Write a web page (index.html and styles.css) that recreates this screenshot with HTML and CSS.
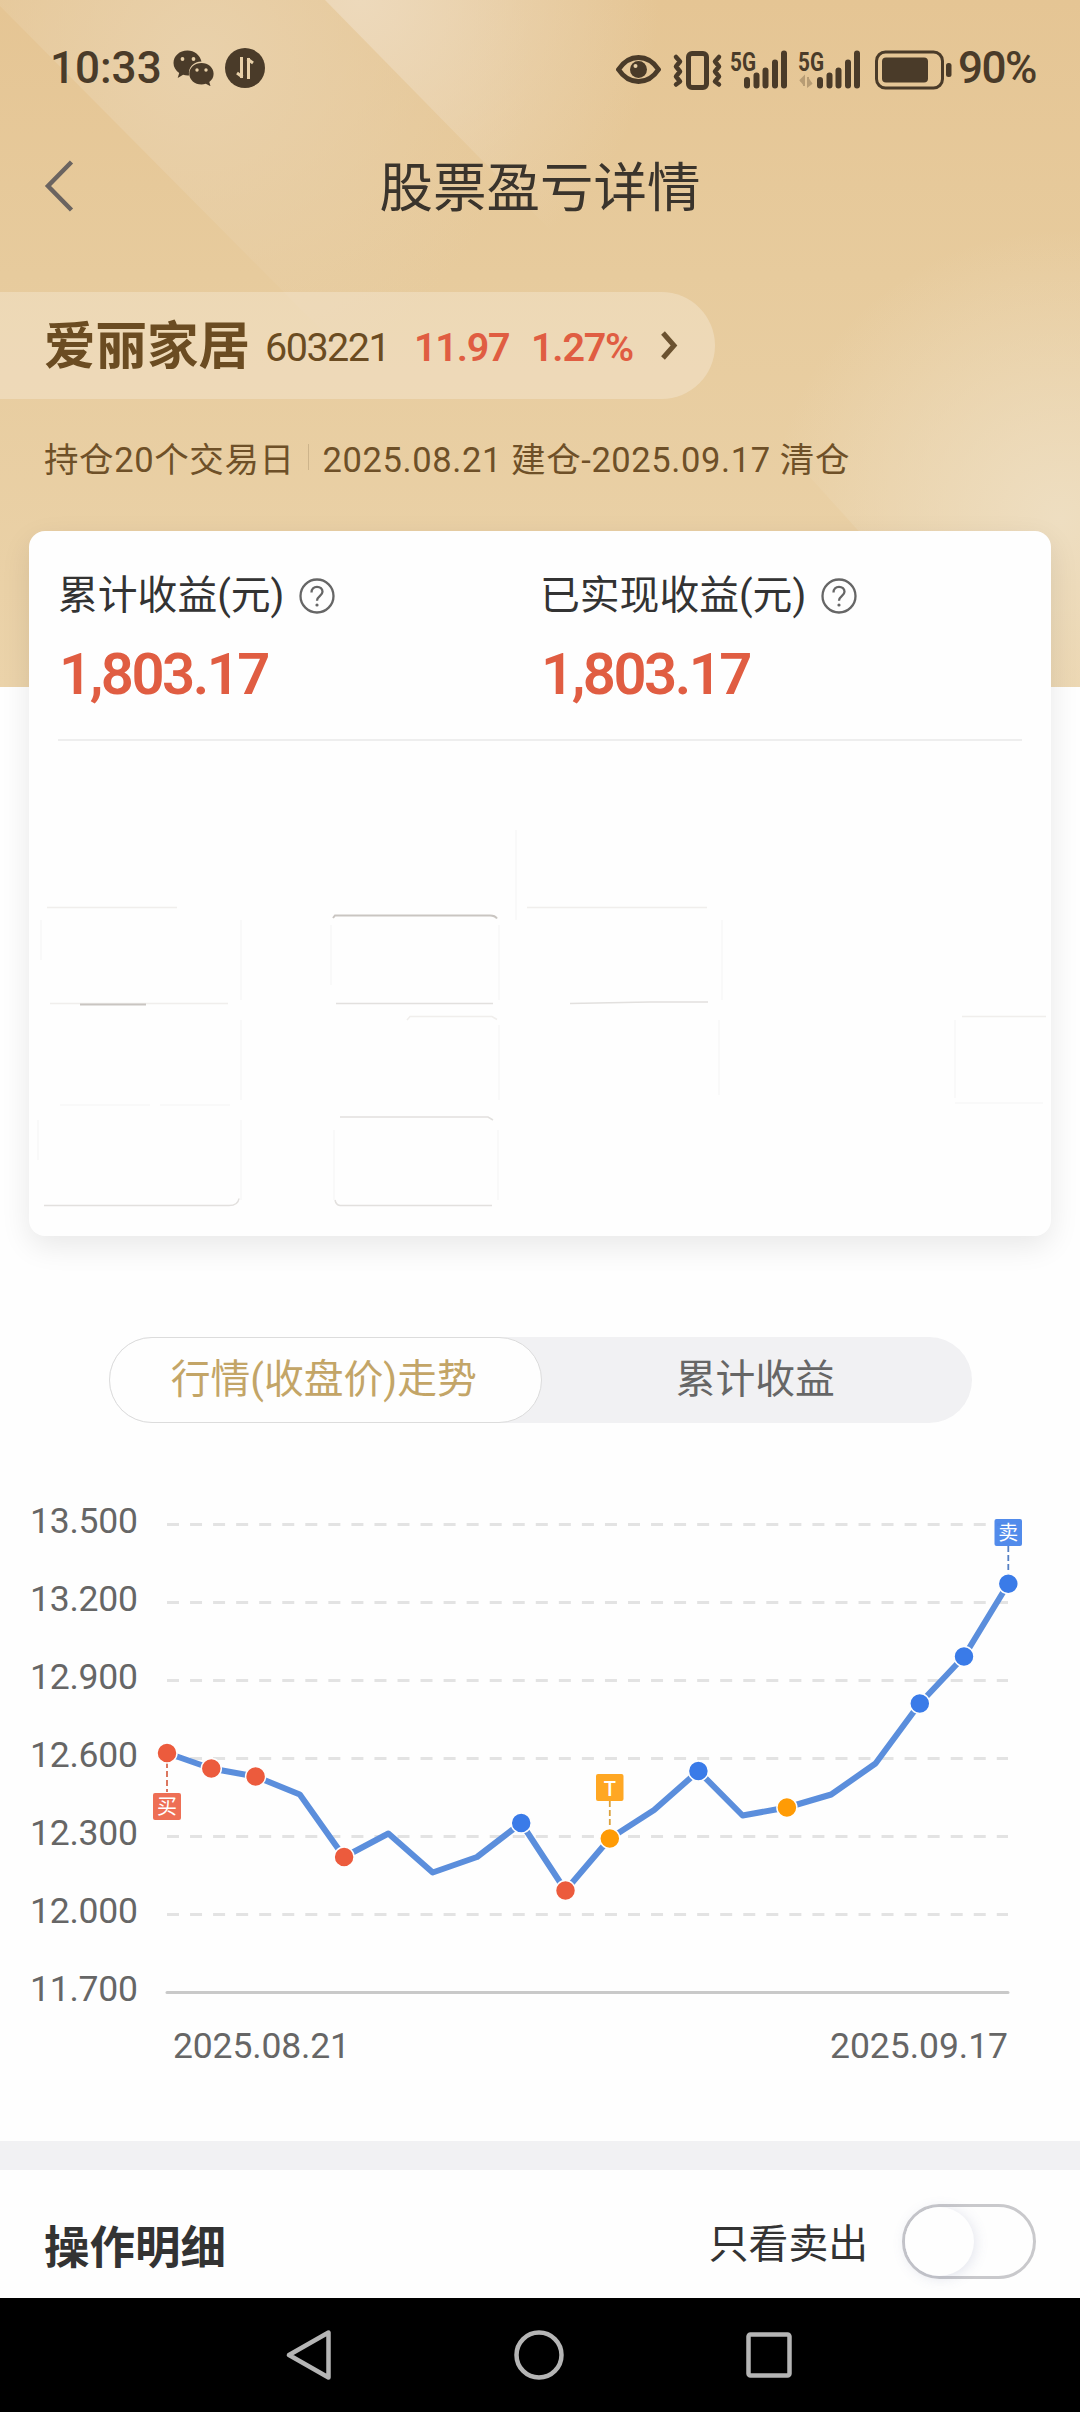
FILE: index.html
```
<!DOCTYPE html>
<html lang="zh-CN">

<head>
    <meta charset="UTF-8">
    <meta name="viewport" content="width=device-width, initial-scale=1.0">
    <title>股票盈亏详情</title>
    <link rel="stylesheet" href="styles.css">
</head>

<body>
    <header class="hero">
        <svg class="hero-bg" viewBox="0 0 1080 687" preserveAspectRatio="none">
            <defs>
                <linearGradient id="base" x1="0" y1="0" x2="0" y2="1">
                    <stop offset="0" stop-color="#e5c594" />
                    <stop offset="0.4" stop-color="#e7cb9d" />
                    <stop offset="1" stop-color="#ebd3aa" />
                </linearGradient>
                <radialGradient id="ray" gradientUnits="userSpaceOnUse" cx="200" cy="60" r="330">
                    <stop offset="0" stop-color="#e9d1ab" />
                    <stop offset="1" stop-color="#e9d1ab" stop-opacity="0" />
                </radialGradient>
                <radialGradient id="ray2" gradientUnits="userSpaceOnUse" cx="360" cy="0" r="300">
                    <stop offset="0" stop-color="#edd9bb" />
                    <stop offset="1" stop-color="#edd9bb" stop-opacity="0" />
                </radialGradient>
                <radialGradient id="ray3" gradientUnits="userSpaceOnUse" cx="1060" cy="520" r="290">
                    <stop offset="0" stop-color="#eedec1" />
                    <stop offset="1" stop-color="#eedec1" stop-opacity="0" />
                </radialGradient>
            </defs>
            <rect width="1080" height="687" fill="url(#base)" />
            <path d="M0 0h700v500H490L0 6z" fill="url(#ray)" />
            <path d="M325 0h755v500H815z" fill="url(#ray2)" />
            <path d="M1080 150v537H1000L740 400z" fill="url(#ray3)" />
        </svg>

        <div class="status-bar">
            <div class="status-left">
                <span class="clock">10:33</span>
                <svg class="wechat" width="42" height="36" viewBox="0 0 42 36">
                    <path d="M14.500 0.500C6.500 0.500 0.500 6 0.500 13c0 4 2.200 7.600 5.700 9.900l-1.500 5 5.400-3.100c1.500.5 3 .6 4.600.6h1.300C15 17 21 11.700 28.500 11.600 27 5 21.300.5 14.500.5z" />
                    <path d="M28.500 13C21.700 13 16.300 17.700 16.300 23.700s5.400 10.800 12.200 10.800c1.600 0 3-.2 4.300-.7l4.700 2.400-1.200-4.200c2.700-2 4.300-5 4.300-8.300C40.600 17.700 35.200 13 28.500 13z" />
                    <g class="hole">
                        <circle cx="9.500" cy="9" r="1.900" />
                        <circle cx="20.500" cy="9" r="1.900" />
                        <circle cx="24" cy="20" r="1.700" />
                        <circle cx="33" cy="20" r="1.700" />
                    </g>
                </svg>
                <svg class="transfer" width="40" height="40" viewBox="0 0 40 40">
                    <circle cx="20" cy="20" r="20" />
                    <path class="hole-line" d="M16.500 9v21M17.500 29l-5.500-4M23.500 31V10M22.500 11l5.500 4" />
                </svg>
            </div>
            <svg class="status-icons" width="336" height="44" viewBox="0 0 336 44">
                <!-- eye -->
                <path class="line" d="M2.500 23.500C13 7.500 32 7.500 42.500 23.500C32 39.500 13 39.500 2.500 23.500z" />
                <circle cx="22.500" cy="23.500" r="8.500" />
                <circle class="hole" cx="19.500" cy="20" r="2" />
                <!-- vibrate -->
                <rect class="line" x="72.500" y="7.500" width="18" height="34" rx="3.500" />
                <path class="line zigzag" d="M60 11l4 4.500-4 5 4 5-4 5 4 5-4 3M103 11l-4 4.500 4 5-4 5 4 5-4 5 4 3" />
                <!-- sim 1 -->
                <text class="net" x="114" y="25" textLength="26" lengthAdjust="spacingAndGlyphs">5G</text>
                <path class="bars" d="M131 34v5.500M140.500 29.500v10M149.500 24.500v15M159 16.500v23M168 7.500v32" />
                <!-- sim 2 -->
                <text class="net" x="182" y="25" textLength="26" lengthAdjust="spacingAndGlyphs">5G</text>
                <path class="idle" d="M184 35l4-4v9M196 37l-4 3V31" />
                <path class="bars" d="M204 34v5.500M213.500 29.500v10M222.500 24.500v15M232 16.500v23M241 7.500v32" />
                <!-- battery -->
                <rect class="thin" x="260.500" y="6" width="66" height="36" rx="9" />
                <rect x="266" y="11.500" width="46" height="25" rx="4" />
                <rect x="330" y="17" width="5.500" height="14" rx="2.500" />
            </svg>
            <span class="battery-level">90%</span>
        </div>

        <div class="title-bar">
            <svg class="back" width="30" height="54" viewBox="0 0 30 54">
                <path d="M27.500 3L4 27l23.500 24" />
            </svg>
            <h1>股票盈亏详情</h1>
        </div>

        <div class="stock-pill">
            <span class="stock-name">爱丽家居</span>
            <span class="stock-code">603221</span>
            <span class="stock-price">11.97</span>
            <span class="stock-change">1.27%</span>
            <svg class="more" width="18" height="30" viewBox="0 0 18 30">
                <path d="M3 2l11 12.500L3 27" />
            </svg>
        </div>

        <div class="holding">
            <span>持仓20个交易日</span>
            <i class="sep"></i>
            <span>2025.08.21 建仓-2025.09.17 清仓</span>
        </div>
    </header>

    <section class="card">
        <div class="profits">
            <div class="profit">
                <div class="label">累计收益(元)
                    <svg class="help" width="36" height="36" viewBox="0 0 36 36">
                        <circle cx="18" cy="18" r="16.500" />
                        <path d="M12.500 14.500c0-3.500 2.400-5.700 5.500-5.700s5.500 2.100 5.500 5c0 4-5.500 4.200-5.500 9" />
                        <circle class="dot" cx="18" cy="27" r="1.600" />
                    </svg>
                </div>
                <div class="amount">1,803.17</div>
            </div>
            <div class="profit">
                <div class="label">已实现收益(元)
                    <svg class="help" width="36" height="36" viewBox="0 0 36 36">
                        <circle cx="18" cy="18" r="16.500" />
                        <path d="M12.500 14.500c0-3.500 2.400-5.700 5.500-5.700s5.500 2.100 5.500 5c0 4-5.500 4.200-5.500 9" />
                        <circle class="dot" cx="18" cy="27" r="1.600" />
                    </svg>
                </div>
                <div class="amount">1,803.17</div>
            </div>
        </div>
        <svg class="cells" width="1022" height="495" viewBox="29 741 1022 495">
            <g class="faint">
                <path d="M516 830v90M241 920v80M41 920v40M722 920v80M499 925v75M331 925v60M241 1020v80M499 1025v75M719 1020v75M955 1020v78M241 1120v80M498 1130v70M334 1130v70M38 1120v40" />
                <path d="M955 1103h88M160 1105h70M60 1105h90" />
            </g>
            <g class="soft">
                <path d="M47 907.500h130M527 907.500h180M962 1016.500h84M407 1020l3-3.500h82l5 3M50 1003.500h178" />
            </g>
            <g class="mid">
                <path d="M336 1003.500h157M570 1003.500l80-1.500h58M340 1117h148l5 3M335 1200q1 5 5 5.500h152M44 1205.500h185q9 0 10-7" />
            </g>
            <path class="strong" d="M333 918l2-2.500h155q5 0 7 3M80 1004.500h66" />
        </svg>
    </section>

    <nav class="tabs">
        <a class="tab active">行情(收盘价)走势</a>
        <a class="tab">累计收益</a>
    </nav>

    <svg class="chart" width="1080" height="600" viewBox="0 1480 1080 600">
        <g class="grid">
            <path d="M167 1524.500h841M167 1602.500h841M167 1680.500h841M167 1758.500h841M167 1836.500h841M167 1914.500h841" />
        </g>
        <path class="axis" d="M167 1992.500h841" />

        <g class="y-labels">
            <text x="30" y="1533" textLength="108">13.500</text>
            <text x="30" y="1611" textLength="108">13.200</text>
            <text x="30" y="1689" textLength="108">12.900</text>
            <text x="30" y="1767" textLength="108">12.600</text>
            <text x="30" y="1845" textLength="108">12.300</text>
            <text x="30" y="1923" textLength="108">12.000</text>
            <text x="30" y="2001" textLength="108">11.700</text>
            <text x="173" y="2058" textLength="177">2025.08.21</text>
            <text x="830" y="2058" textLength="178">2025.09.17</text>
        </g>

        <polyline class="price" points="167,1753 211.300,1768.500 255.600,1776.500 299.800,1794.500 344.100,1857 388.400,1833.500 432.700,1872.500 477,1857 521.200,1823 565.500,1890.500 609.800,1838.500 654.100,1810 698.400,1771 742.600,1815.500 786.900,1807.500 831.200,1794.500 875.500,1763.500 919.800,1703.500 964,1656.500 1008.300,1583.700" />

        <g class="buy">
            <path class="lead" d="M167 1762v30" />
            <rect x="153" y="1793" width="28" height="27" rx="2" />
            <circle cx="167" cy="1753" r="10" />
            <circle cx="211.300" cy="1768.500" r="10" />
            <circle cx="255.600" cy="1776.500" r="10" />
            <circle cx="344.100" cy="1857" r="10" />
            <circle cx="565.500" cy="1890.500" r="10" />
        </g>
        <g class="sell">
            <path class="lead" d="M1008.300 1546v30" />
            <rect x="994.500" y="1519" width="27.500" height="27" rx="2" />
            <circle cx="521.200" cy="1823" r="10" />
            <circle cx="698.400" cy="1771" r="10" />
            <circle cx="919.800" cy="1703.500" r="10" />
            <circle cx="964" cy="1656.500" r="10" />
            <circle cx="1008.300" cy="1583.700" r="10" />
        </g>
        <g class="t-trade">
            <path class="lead" d="M609.800 1801v30" />
            <rect x="596" y="1774" width="27.500" height="27" rx="2" />
            <circle cx="609.800" cy="1838.500" r="10" />
            <circle cx="786.900" cy="1807.500" r="10" />
        </g>
        <g class="tags">
            <text x="167" y="1814">买</text>
            <text x="1008.300" y="1540">卖</text>
            <text x="609.800" y="1795.500" class="t-text">T</text>
        </g>
    </svg>

    <section class="details">
        <h2>操作明细</h2>
        <span class="only-sell">只看卖出</span>
        <div class="switch"><div class="knob"></div></div>
    </section>

    <footer class="nav-bar">
        <svg width="46" height="52" viewBox="0 0 46 52">
            <path d="M42.500 3.500v45L3 26z" />
        </svg>
        <svg width="50" height="50" viewBox="0 0 50 50">
            <circle cx="25" cy="25" r="22.500" />
        </svg>
        <svg width="46" height="46" viewBox="0 0 46 46">
            <rect x="2.500" y="2.500" width="41" height="41" rx="2" />
        </svg>
    </footer>
</body>

</html>
```
FILE: styles.css
```
* {
    box-sizing: border-box;
}

body {
    margin: 0;
    width: 1080px;
    height: 2412px;
    overflow: hidden;
    display: flex;
    flex-direction: column;
    background-color: #fefefe;
    font-family: Roboto, 'Noto Sans CJK SC', sans-serif;
    color: #333;
}

h1,
h2 {
    margin: 0;
}

svg {
    display: block;
    flex-shrink: 0;
}

.hero {
    position: relative;
    height: 687px;
    flex-shrink: 0;
}

.hero-bg {
    position: absolute;
    top: 0;
    left: 0;
    width: 100%;
    height: 100%;
    z-index: -1;
}

/* status bar */
.status-bar {
    height: 136px;
    padding: 0 42px 0 50px;
    display: flex;
    align-items: center;
    color: #4a3b29;
    fill: #4a3b29;
    font-size: 44px;
    font-weight: 500;
}

.status-left {
    display: flex;
    align-items: center;
    flex: 1;
}

.clock {
    width: 123px;
}

.transfer {
    margin-left: 10px;
}

.hole {
    fill: #e8d0a8;
}

.hole-line {
    fill: none;
    stroke: #e8d0a8;
    stroke-width: 3;
}

.line {
    fill: none;
    stroke: #4a3b29;
    stroke-width: 5;
    stroke-linejoin: round;
    stroke-linecap: round;
}

.line.zigzag {
    stroke-width: 4.5;
}

.thin {
    fill: none;
    stroke: #4a3b29;
    stroke-width: 3;
}

.bars {
    stroke: #4a3b29;
    stroke-width: 6;
    stroke-linecap: round;
}

.idle {
    fill: #b79c74;
    stroke: #b79c74;
    stroke-width: 2;
}

.net {
    font-size: 26px;
    font-weight: 700;
}

.battery-level {
    width: 80px;
    margin-left: 6px;
    letter-spacing: -1.5px;
}

/* title */
.title-bar {
    height: 156px;
    padding: 0 44px 56px;
    display: flex;
    align-items: center;
}

.back {
    fill: none;
    stroke: #6b6460;
    stroke-width: 4.5;
}

.title-bar h1 {
    flex: 1;
    margin: -5px 30px 0 0;
    text-align: center;
    font-size: 53.5px;
    font-weight: 400;
    color: #3a342c;
}

/* stock */
.stock-pill {
    width: 715px;
    height: 107px;
    padding-left: 44px;
    display: flex;
    align-items: center;
    white-space: nowrap;
    background-color: rgba(255, 255, 255, 0.25);
    border-radius: 0 54px 54px 0;
    color: #6b4c22;
    font-size: 39.5px;
}

.stock-name {
    width: 221px;
    margin-top: -8px;
    font-size: 51.5px;
    font-weight: 700;
}

.stock-code,
.stock-price,
.stock-change {
    padding-top: 4px;
}

.stock-code {
    width: 149px;
    letter-spacing: -1.5px;
}

.stock-price,
.stock-change {
    color: #e05d42;
    font-weight: 600;
    letter-spacing: -1.2px;
}

.stock-price {
    width: 117px;
}

.stock-change {
    width: 129px;
}

.more {
    fill: none;
    stroke: #6b5230;
    stroke-width: 5;
}

.holding {
    margin-top: 33px;
    padding-left: 44px;
    display: flex;
    align-items: center;
    font-size: 34.5px;
    letter-spacing: 0.6px;
    white-space: nowrap;
    color: #6e5028;
}

.sep {
    width: 1px;
    height: 26px;
    margin: 0 14px 0 13px;
    background-color: #cdb48b;
}

/* profit card */
.card {
    position: relative;
    width: 1022px;
    height: 705px;
    margin: -156px auto 0;
    flex-shrink: 0;
    background-color: #fefefe;
    border-radius: 16px;
    box-shadow: 0 10px 30px rgba(0, 0, 0, 0.09);
}

.profits {
    height: 210px;
    margin: 0 29px;
    padding-top: 28px;
    display: flex;
    border-bottom: 2px solid #eee;
}

.profit {
    width: 484px;
}

.label {
    display: flex;
    align-items: center;
    gap: 15px;
    height: 64px;
    font-size: 39.8px;
    white-space: nowrap;
}

.help {
    margin-top: 10px;
    fill: none;
    stroke: #666;
    stroke-width: 2.3;
}

.help .dot {
    fill: #666;
    stroke: none;
}

.amount {
    padding: 4px 0 0 1px;
    font-size: 58px;
    line-height: 94px;
    font-weight: 600;
    letter-spacing: -2.5px;
    color: #e05d42;
}

.cells {
    fill: none;
    stroke-width: 1.5;
}

.faint {
    stroke: #f8f8f8;
}

.soft {
    stroke: #f0eeec;
}

.mid {
    stroke: #e2e0de;
}

.strong {
    stroke: #c9c5c1;
    stroke-width: 2;
}

/* tabs */
.tabs {
    width: 863px;
    height: 86px;
    margin: 101px 0 57px 109px;
    flex-shrink: 0;
    display: flex;
    background-color: #f1f1f3;
    border-radius: 43px;
}

.tab {
    flex: 1;
    display: flex;
    align-items: center;
    justify-content: center;
    padding: 0 3px 9px 0;
    font-size: 39.8px;
    color: #666;
}

.tab.active {
    background-color: #fefefe;
    border: 1.5px solid #dcdcdc;
    border-radius: 43px;
    color: #c3a567;
}

/* chart */
.grid {
    stroke: #e3e3e3;
    stroke-width: 3;
    stroke-dasharray: 12 11.05;
}

.axis {
    stroke: #c9c9c9;
    stroke-width: 3;
    stroke-linecap: round;
}

.y-labels {
    font-size: 35.5px;
    fill: #666;
}

.price {
    fill: none;
    stroke: #5b8edc;
    stroke-width: 6;
    stroke-linejoin: round;
}

.chart circle {
    stroke: #fefefe;
    stroke-width: 1.5;
}

.lead {
    stroke-width: 1.8;
    stroke-dasharray: 6 3;
}

.buy {
    fill: #ec5b3d;
    stroke: #d8694f;
}

.sell {
    fill: #3a7be8;
    stroke: #5580c4;
}

.t-trade {
    fill: #ff9b05;
    stroke: #dba13c;
}

.chart rect {
    stroke: none;
    opacity: 0.88;
}

.tags {
    font-size: 20px;
    text-anchor: middle;
    fill: #fff;
}

.t-text {
    font-weight: 500;
}

/* trade details */
.details {
    margin-top: 61px;
    height: 157px;
    padding: 15px 44px 0;
    flex-shrink: 0;
    display: flex;
    align-items: center;
    border-top: 29px solid #f1f1f3;
}

.details h2 {
    flex: 1;
    margin-top: 4px;
    font-size: 45.5px;
    font-weight: 700;
}

.only-sell {
    margin: -3px 34px 0 0;
    font-size: 39.8px;
}

.switch {
    width: 134px;
    height: 75px;
    border: 3px solid #c9c9cc;
    border-radius: 38px;
}

.knob {
    width: 69px;
    height: 69px;
    border-radius: 50%;
    background-color: #fefefe;
    box-shadow: 1px 2px 14px rgba(90, 100, 150, 0.18);
}

/* system navigation */
.nav-bar {
    flex: 1;
    padding: 0 288px 0 286px;
    display: flex;
    align-items: center;
    justify-content: space-between;
    background-color: #000;
    fill: none;
    stroke: #b5b5b5;
    stroke-width: 4.5;
    stroke-linejoin: round;
}
```
